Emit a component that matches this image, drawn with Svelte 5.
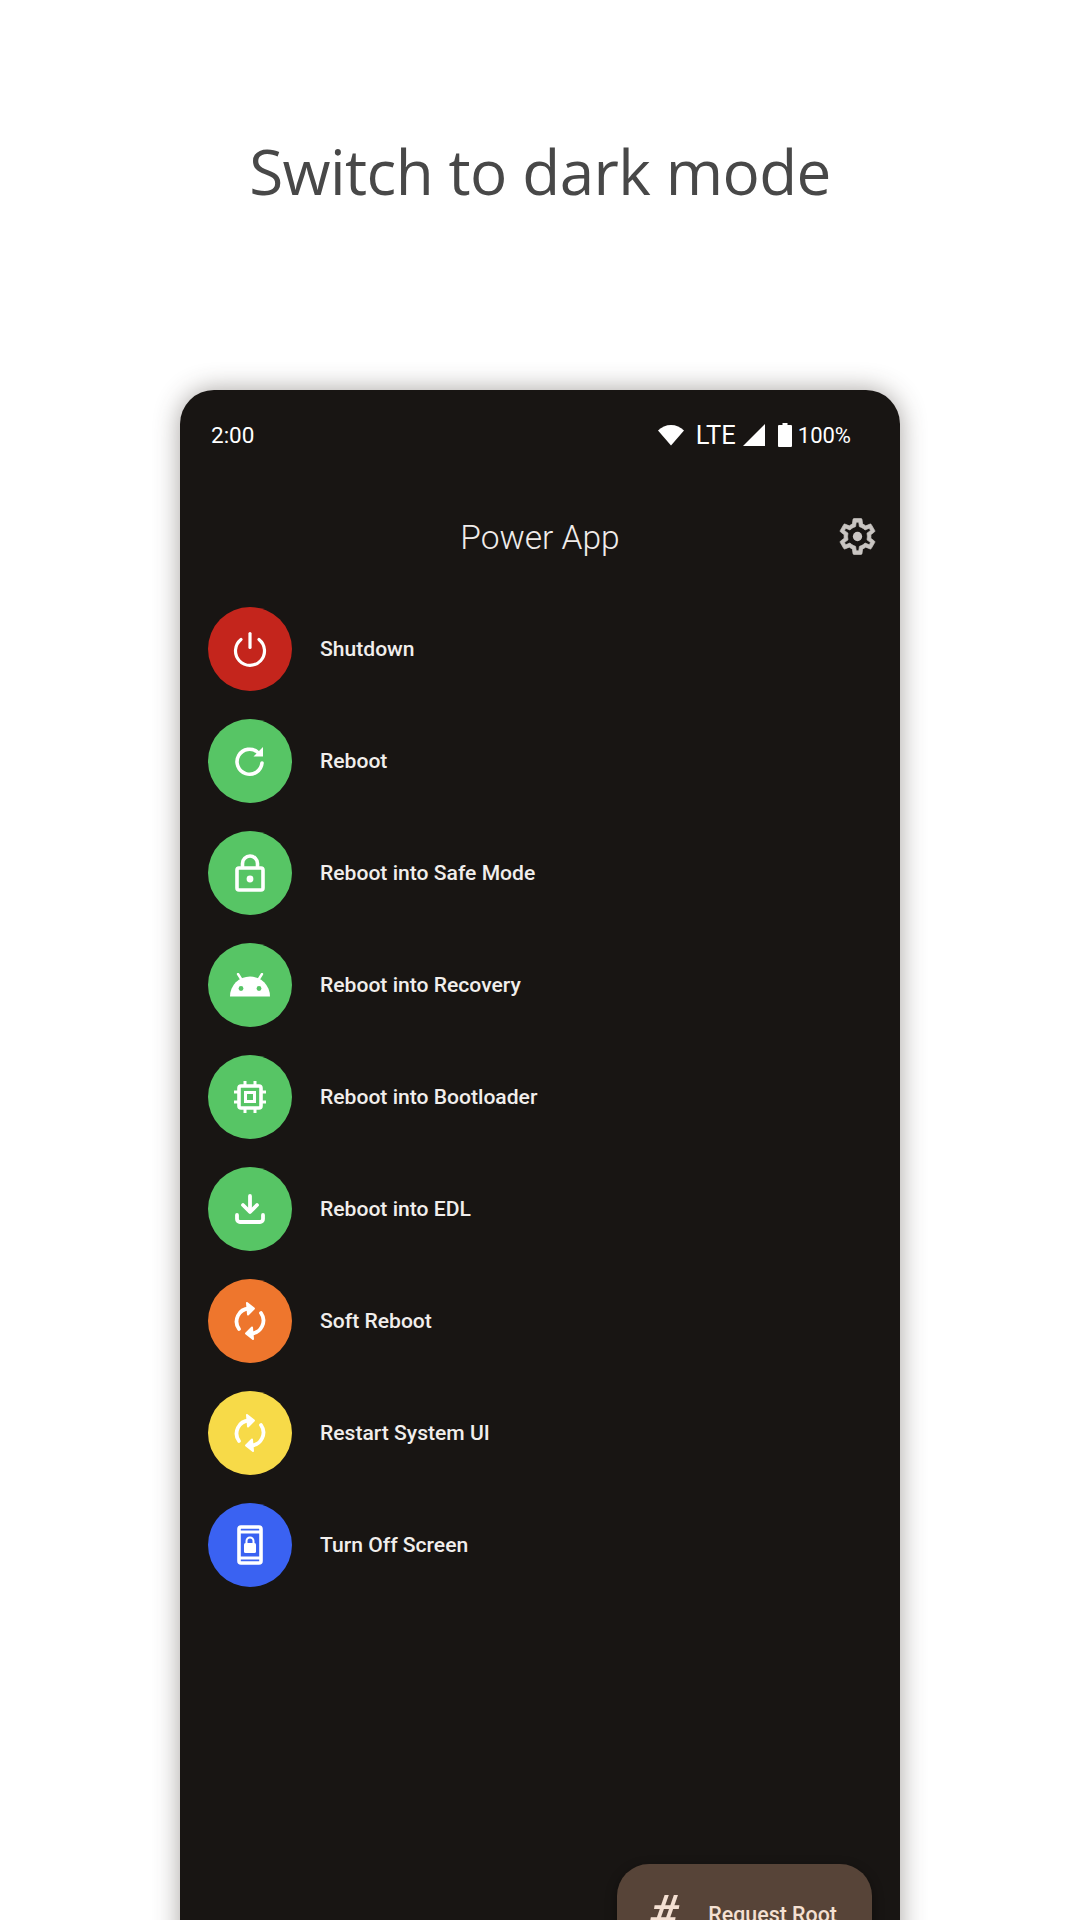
<script>
    const actions = [
        { label: "Shutdown", color: "#c4251c", icon: "power" },
        { label: "Reboot", color: "#57c565", icon: "reboot" },
        { label: "Reboot into Safe Mode", color: "#57c565", icon: "lock" },
        { label: "Reboot into Recovery", color: "#57c565", icon: "android" },
        { label: "Reboot into Bootloader", color: "#57c565", icon: "chip" },
        { label: "Reboot into EDL", color: "#57c565", icon: "download" },
        { label: "Soft Reboot", color: "#ee762d", icon: "sync" },
        { label: "Restart System UI", color: "#f7da48", icon: "sync" },
        { label: "Turn Off Screen", color: "#3a62f2", icon: "screen" },
    ];
</script>

<div class="page">
    <h1>Switch to dark mode</h1>

    <div class="phone">
        <div class="status">
            <span class="time">2:00</span>
            <div class="status-right">
                <svg width="28" height="24" viewBox="0 0 28 24"><path d="M14 22.500 1 7.500C4.500 4 9 2 14 2s9.500 2 13 5.500z" fill="#fff" /></svg>
                <span class="lte">LTE</span>
                <svg width="22" height="22" viewBox="0 0 22 22"><path d="M22 0v22H0z" fill="#fff" /></svg>
                <svg class="battery" width="14" height="24" viewBox="0 0 14 24"><path d="M4.500 0h5v2H13a1 1 0 0 1 1 1v20a1 1 0 0 1-1 1H1a1 1 0 0 1-1-1V3a1 1 0 0 1 1-1h3.500z" fill="#fff" /></svg>
                <span class="pct">100%</span>
            </div>
        </div>

        <header>
            <span class="app-title">Power App</span>
            <svg class="gear" width="43" height="43" viewBox="0 0 24 24">
                <path fill="#c9c5c2" stroke="#c9c5c2" stroke-width="0.4" d="M19.430 12.980c.04-.32.07-.64.07-.98s-.03-.66-.07-.98l2.110-1.650c.19-.15.240-.42.120-.64l-2-3.460c-.12-.22-.39-.3-.61-.22l-2.490 1c-.52-.4-1.080-.73-1.690-.98l-.38-2.650A.49.49 0 0 0 14 2h-4c-.25 0-.46.18-.49.42l-.38 2.650c-.61.25-1.170.59-1.690.98l-2.490-1c-.23-.09-.49 0-.61.22l-2 3.460c-.13.220-.07.490.12.640l2.110 1.650c-.04.320-.07.650-.07.980s.03.660.07.980l-2.110 1.650c-.19.150-.24.420-.12.640l2 3.460c.12.220.39.300.61.220l2.490-1c.52.400 1.080.730 1.690.980l.38 2.650c.03.240.24.420.49.420h4c.25 0 .46-.18.49-.42l.38-2.650c.61-.25 1.170-.59 1.690-.98l2.490 1c.23.090.49 0 .61-.22l2-3.460c.12-.22.07-.49-.12-.64zM17.450 11.270c.04.310.05.520.05.730s-.02.430-.05.730l-.14 1.130.89.700 1.080.840-.7 1.210-1.270-.51-1.040-.42-.9.680c-.43.320-.84.560-1.250.730l-1.060.430-.16 1.130-.2 1.350h-1.400l-.19-1.350-.16-1.130-1.060-.43c-.43-.18-.83-.41-1.230-.71l-.91-.7-1.060.43-1.270.51-.7-1.210 1.080-.84.890-.7-.14-1.130c-.03-.31-.05-.54-.05-.74s.02-.43.05-.73l.14-1.130-.89-.7-1.080-.84.7-1.210 1.270.51 1.040.42.9-.68c.43-.32.84-.56 1.250-.73l1.060-.43.16-1.130.2-1.350h1.390l.19 1.350.16 1.130 1.060.43c.43.18.83.41 1.230.71l.91.7 1.060-.43 1.270-.51.7 1.210-1.070.85-.89.7z" />
                <circle cx="12" cy="12" r="2.600" fill="#c9c5c2" />
            </svg>
        </header>

        <ul class="actions">
            {#each actions as action}
                <li>
                    <div class="circle" style="background: {action.color}">
                        {#if action.icon === "power"}
                            <svg width="36" height="36" viewBox="0 0 36 36" fill="none" stroke="#fff" stroke-width="3.200" stroke-linecap="round">
                                <path d="M18 2.500v14" />
                                <path d="M9 8.500a14.500 14.500 0 1 0 18 0" />
                            </svg>
                        {:else if action.icon === "reboot"}
                            <svg width="34" height="34" viewBox="0 0 34 34" fill="none" stroke="#fff" stroke-width="3.600" stroke-linecap="round">
                                <path d="M29 19a12.500 12.500 0 1 1-4-10.500" />
                                <path d="M30 3v9.500h-9.500z" fill="#fff" stroke="none" />
                            </svg>
                        {:else if action.icon === "lock"}
                            <svg width="30" height="38" viewBox="0 0 30 38" fill="none" stroke="#fff" stroke-width="3.600" stroke-linejoin="round">
                                <rect x="2" y="14" width="26" height="22" rx="2" />
                                <path d="M7.500 14V9.500a7.500 7.500 0 0 1 15 0V14" />
                                <circle cx="15" cy="25" r="3.400" fill="#fff" stroke="none" />
                            </svg>
                        {:else if action.icon === "android"}
                            <svg width="40" height="24" viewBox="0 0 40 24">
                                <path d="M0 23.500a20 20 0 0 1 40 0z" fill="#fff" />
                                <path d="M8 1l5 8M32 1l-5 8" stroke="#fff" stroke-width="2.400" stroke-linecap="round" />
                                <circle cx="11" cy="15.500" r="2.400" fill="#57c565" />
                                <circle cx="29" cy="15.500" r="2.400" fill="#57c565" />
                            </svg>
                        {:else if action.icon === "chip"}
                            <svg width="32" height="32" viewBox="0 0 32 32" fill="none" stroke="#fff" stroke-width="3.600">
                                <rect x="5" y="5" width="22" height="22" rx="2" />
                                <rect x="11.500" y="11.500" width="9" height="9" stroke-width="3" />
                                <path d="M11 0v4M21 0v4M11 28v4M21 28v4M0 11h4M0 21h4M28 11h4M28 21h4" stroke-width="3" />
                            </svg>
                        {:else if action.icon === "download"}
                            <svg width="30" height="30" viewBox="0 0 30 30" fill="none" stroke="#fff" stroke-width="3.800" stroke-linecap="round" stroke-linejoin="round">
                                <path d="M15 2v15" />
                                <path d="M8 11l7 7 7-7" />
                                <path d="M2 21v4a3 3 0 0 0 3 3h20a3 3 0 0 0 3-3v-4" />
                            </svg>
                        {:else if action.icon === "sync"}
                            <svg width="32" height="40" viewBox="0 0 32 40" fill="none" stroke="#fff" stroke-width="3.800" stroke-linecap="round" stroke-linejoin="round">
                                <path d="M5 28A13 13 0 0 1 15 7.500" />
                                <path d="M13 2l7 5.500-6 6z" fill="#fff" stroke-width="2" />
                                <path d="M27 12a13 13 0 0 1-10 20.500" />
                                <path d="M19 38l-7-5.500 6-6z" fill="#fff" stroke-width="2" />
                            </svg>
                        {:else}
                            <svg width="26" height="40" viewBox="0 0 26 40">
                                <rect x="2" y="2" width="22" height="36" rx="2" fill="none" stroke="#fff" stroke-width="3.600" />
                                <path d="M2 7h22M2 33h22" stroke="#fff" stroke-width="3" />
                                <rect x="7" y="18" width="12" height="10" rx="1.500" fill="#fff" />
                                <path d="M9.500 18v-2a3.500 3.500 0 0 1 7 0v2" fill="none" stroke="#fff" stroke-width="2" />
                            </svg>
                        {/if}
                    </div>
                    <span class="label">{action.label}</span>
                </li>
            {/each}
        </ul>

        <div class="fab">
            <span class="hash">#</span>
            <span class="fab-label">Request Root</span>
        </div>
    </div>
</div>

<style>
    :global(body) {
        margin: 0;
        padding: 0;
        background: #fff;
        overflow: hidden;
    }

    .page {
        height: 1920px;
        overflow: hidden;
        display: flex;
        flex-direction: column;
        align-items: center;
        background: #fff;
    }

    h1 {
        flex: none;
        margin: 0;
        padding-top: 127px;
        height: 390px;
        box-sizing: border-box;
        font-family: "Open Sans", sans-serif;
        font-size: 62px;
        line-height: 88px;
        font-weight: 400;
        letter-spacing: -0.600px;
        color: #484848;
    }

    .phone {
        position: relative;
        flex: none;
        width: 720px;
        height: 1600px;
        box-sizing: border-box;
        padding-top: 27px;
        background: #181513;
        border-radius: 34px 34px 0 0;
        box-shadow: 0 0 26px rgba(60, 50, 45, 0.45);
        color: #f3f0ee;
        font-family: Roboto, sans-serif;
    }

    .status {
        display: flex;
        justify-content: space-between;
        align-items: center;
        height: 36px;
        padding: 0 49px 0 31px;
        font-size: 22px;
        color: #fff;
    }

    .time {
        font-size: 22.500px;
    }

    .status-right {
        display: flex;
        align-items: center;
    }

    .lte {
        font-size: 25.500px;
        margin: 0 7px 0 11px;
    }

    .battery {
        margin: 0 6px 0 13px;
    }

    header {
        position: relative;
        display: flex;
        justify-content: center;
        align-items: center;
        height: 50px;
        margin-top: 59px;
    }

    .app-title {
        font-size: 33.500px;
        font-weight: 300;
        color: #f0ecea;
    }

    .gear {
        position: absolute;
        right: 21px;
        top: 3px;
    }

    .actions {
        list-style: none;
        margin: 44.500px 0 0;
        padding: 0 0 0 28px;
        display: flex;
        flex-direction: column;
        gap: 28px;
    }

    .actions li {
        display: flex;
        align-items: center;
        gap: 28px;
    }

    .circle {
        width: 84px;
        height: 84px;
        border-radius: 50%;
        display: flex;
        align-items: center;
        justify-content: center;
        flex: none;
    }

    .label {
        font-size: 21.100px;
        font-weight: 500;
        color: #f1eeec;
    }

    .fab {
        position: absolute;
        left: 437px;
        top: 1474px;
        width: 255px;
        height: 100px;
        box-sizing: border-box;
        padding-left: 32px;
        display: flex;
        align-items: center;
        gap: 30px;
        background: #574438;
        border-radius: 32px;
        box-shadow: 0 4px 12px rgba(0, 0, 0, 0.4);
        color: #f4e0d2;
    }

    .hash {
        font-size: 50px;
        font-style: italic;
        font-weight: 500;
    }

    .fab-label {
        font-size: 21.400px;
        font-weight: 500;
    }
</style>
